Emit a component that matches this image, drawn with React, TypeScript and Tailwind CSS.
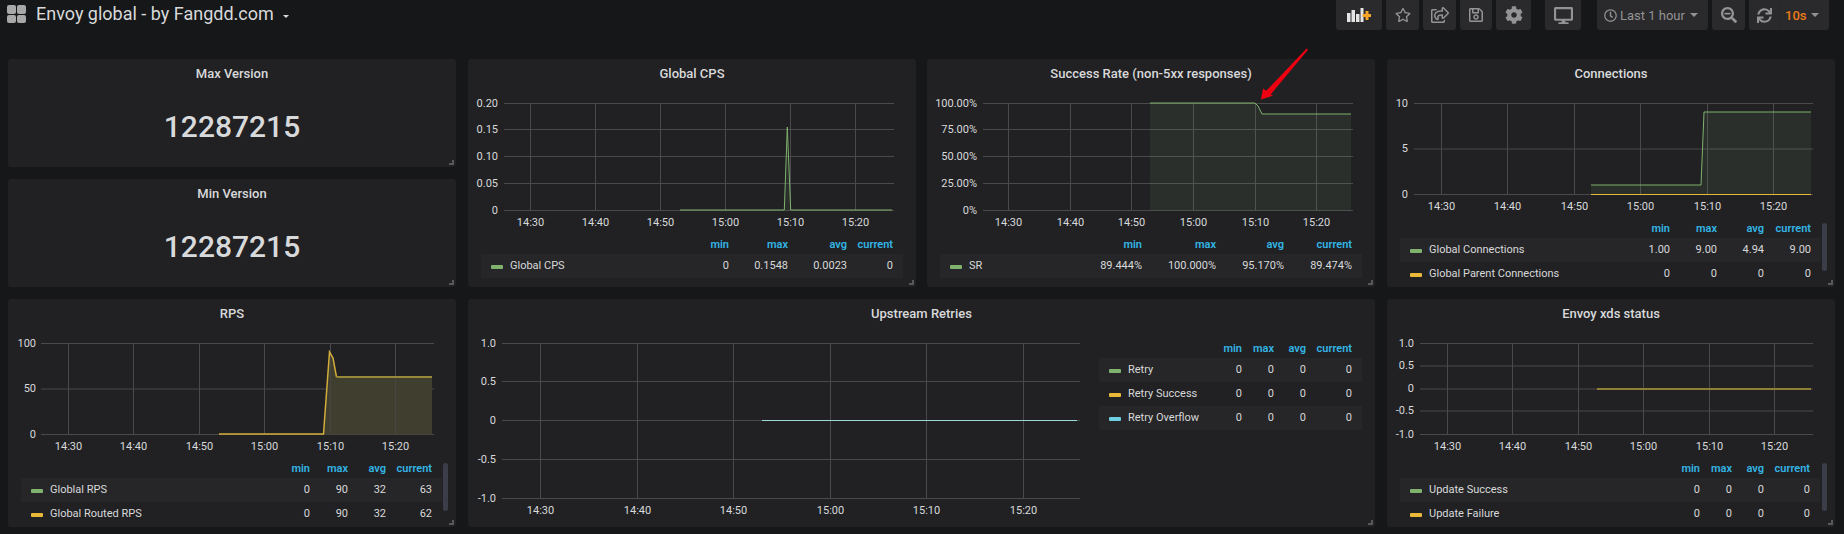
import type { ReactNode } from "react";
import { FaRegStar, FaRegShareSquare, FaRegSave, FaCog, FaDesktop, FaRegClock, FaSearchMinus, FaSync } from "react-icons/fa";

const GREEN = "#7eb26d";
const YELLOW = "#eab839";
const CYAN = "#6ed0e0";
const TIMES = ["14:30", "14:40", "14:50", "15:00", "15:10", "15:20"];

function Caret({ className }: { className?: string }) {
  return (
    <svg viewBox="0 0 8 4" className={className}>
      <polygon points="0,0 8,0 4,4" fill="currentColor" />
    </svg>
  );
}

function NavButton({ className, children }: { className: string; children: ReactNode }) {
  return (
    <div className={`flex h-[30px] items-center justify-center rounded-b-[3px] bg-[#2a2a2c] text-[#939395] ${className}`}>
      {children}
    </div>
  );
}

function Header() {
  return (
    <div className="flex h-[59px] items-start pr-[15px]">
      <div className="flex h-[28px] items-center pl-[7px]">
        <div className="grid h-[18px] w-[19px] grid-cols-2 gap-px">
          <span className="rounded-[2px] bg-[#a8a8a8]" />
          <span className="rounded-[2px] bg-[#a8a8a8]" />
          <span className="rounded-[2px] bg-[#a8a8a8]" />
          <span className="rounded-[2px] bg-[#a8a8a8]" />
        </div>
        <span className="ml-[10px] text-[18px] leading-none text-[#d8d9da]">Envoy global - by Fangdd.com</span>
        <Caret className="ml-[9px] mt-[5px] h-[3px] w-[6px] text-[#d8d9da]" />
      </div>
      <div className="ml-auto flex items-start">
        <NavButton className="w-[46px]">
          <svg width="24" height="14" viewBox="0 0 24 14">
            <rect x="0" y="5" width="3.5" height="9" fill="#e4e4e4" />
            <rect x="4.5" y="2" width="3.5" height="12" fill="#e4e4e4" />
            <rect x="9" y="6" width="3.5" height="8" fill="#e4e4e4" />
            <rect x="13.5" y="0" width="3" height="14" fill="#e4e4e4" />
            <path d="M18.5 3h3v3h3v3h-3v3h-3V9h-3V6h3z" fill="#f6a528" />
          </svg>
        </NavButton>
        <NavButton className="ml-[4px] w-[33px]"><FaRegStar size={16} /></NavButton>
        <NavButton className="ml-[4px] w-[33px]"><FaRegShareSquare size={18} /></NavButton>
        <NavButton className="ml-[4px] w-[32px]"><FaRegSave size={16} /></NavButton>
        <NavButton className="ml-[4px] w-[35px]"><FaCog size={18} /></NavButton>
        <NavButton className="ml-[14px] w-[36px]"><FaDesktop size={19} /></NavButton>
        <NavButton className="ml-[16px] w-[111px] justify-start pl-[7px]">
          <FaRegClock size={13} />
          <span className="ml-[3px] text-[13px] leading-none">Last 1 hour</span>
          <Caret className="ml-[5px] h-[4px] w-[8px]" />
        </NavButton>
        <NavButton className="ml-[4px] w-[33px]"><FaSearchMinus size={16} /></NavButton>
        <NavButton className="ml-[4px] w-[80px] justify-start">
          <div className="flex h-full w-[31px] items-center justify-center border-r border-[#262628]">
            <FaSync size={15} />
          </div>
          <span className="ml-[5px] text-[13px] font-medium leading-none text-[#eb7b18]">10s</span>
          <Caret className="ml-[5px] h-[4px] w-[8px]" />
        </NavButton>
      </div>
    </div>
  );
}

function Panel({ title, className, children }: { title: string; className: string; children: ReactNode }) {
  return (
    <div className={`relative overflow-hidden rounded-[3px] bg-[#212124] ${className}`}>
      <div className="h-[28px] pt-[5px] text-center text-[13px] font-medium leading-[20px] text-[#d8d9da]">{title}</div>
      {children}
      <span className="absolute bottom-[2px] right-[2px] h-[5px] w-[5px] border-b-2 border-r-2 border-[#58585a]" />
    </div>
  );
}

function Stat({ title, value }: { title: string; value: string }) {
  return (
    <Panel title={title} className="h-[108px]">
      <div className="mt-[22px] text-center text-[30px] font-medium leading-[36px] text-[#d8d9da]">{value}</div>
    </Panel>
  );
}

type ChartProps = {
  box: [number, number, number, number];
  grid: [number, string][];
  xl: number;
  xr: number;
  ticks: number[];
  labelY: number;
  axisX: number;
  children?: ReactNode;
};

// box is in page coordinates, so every shape below can use what was measured on the screenshot
function Chart({ box, grid, xl, xr, ticks, labelY, axisX, children }: ChartProps) {
  return (
    <svg width={box[2]} height={box[3]} viewBox={box.join(" ")} className="block shrink-0">
      {grid.map(([y]) => (
        <line key={y} x1={xl} x2={xr} y1={y} y2={y} stroke="#4a4a4c" strokeWidth="1" />
      ))}
      {ticks.map((x) => (
        <line key={x} x1={x} x2={x} y1={grid[0][0]} y2={grid[grid.length - 1][0]} stroke="#4a4a4c" strokeWidth="1" />
      ))}
      {children}
      {grid.map(([y, label]) => (
        <text key={label} x={axisX} y={y + 3} textAnchor="end" fontSize="11" fill="#d8d9da">{label}</text>
      ))}
      {ticks.map((x, i) => (
        <text key={x} x={x} y={labelY} textAnchor="middle" fontSize="11" fill="#d8d9da">{TIMES[i]}</text>
      ))}
    </svg>
  );
}

type Row = { name: string; color: string; values: string[] };

function Legend({ rows, cols, className }: { rows: Row[]; cols: string; className: string }) {
  return (
    <div className={`text-[11px] leading-none ${className}`}>
      <div className={`grid h-[20px] items-center pr-[10px] text-right font-semibold text-[#33b5e5] ${cols}`}>
        <span className="col-start-2">min</span>
        <span>max</span>
        <span>avg</span>
        <span>current</span>
      </div>
      {rows.map((row, i) => (
        <div key={row.name} className={`grid h-[24px] items-center pb-[2px] pr-[10px] text-right text-[#d8d9da] ${cols} ${i % 2 === 0 ? "bg-[#262628]" : ""}`}>
          <div className="flex items-center whitespace-nowrap pl-[10px]">
            <span className="mt-[4px] h-[4px] w-[12px] rounded-[1px]" style={{ backgroundColor: row.color }} />
            <span className="ml-[7px]">{row.name}</span>
          </div>
          {row.values.map((v, j) => (
            <span key={j}>{v}</span>
          ))}
        </div>
      ))}
    </div>
  );
}

function Scrollbar({ className }: { className: string }) {
  return <span className={`absolute w-[5px] rounded-[3px] bg-[#3b3d49] ${className}`} />;
}

export default function App() {
  return (
    <div className="relative h-[534px] w-[1844px] overflow-hidden bg-[#161719] font-['Roboto',sans-serif]">
      <Header />
      <div className="grid grid-cols-[460px_459px_460px_448px] gap-y-[12px] pl-[8px]">
        <div className="flex h-[228px] w-[448px] flex-col gap-[12px]">
          <Stat title="Max Version" value="12287215" />
          <Stat title="Min Version" value="12287215" />
        </div>

        <Panel title="Global CPS" className="h-[228px] w-[448px]">
          <Chart
            box={[468, 87, 448, 147]}
            grid={[[103.5, "0.20"], [129.5, "0.15"], [156.5, "0.10"], [183.5, "0.05"], [210.5, "0"]]}
            xl={504}
            xr={894}
            ticks={[530.5, 595.5, 660.5, 725.5, 790.5, 855.5]}
            labelY={226}
            axisX={498}
          >
            <polygon points="680,210.5 784.3,210.5 787.3,127 790.7,210.5 892,210.5" fill={GREEN} fillOpacity="0.1" />
            <polyline points="680,210 784.3,210 787.3,127 790.7,210 892,210" fill="none" stroke={GREEN} strokeWidth="1" />
          </Chart>
          <Legend
            className="mx-[13px] w-[422px]"
            cols="grid-cols-[1fr_59px_59px_59px_46px]"
            rows={[{ name: "Global CPS", color: GREEN, values: ["0", "0.1548", "0.0023", "0"] }]}
          />
        </Panel>

        <Panel title="Success Rate (non-5xx responses)" className="h-[228px] w-[448px]">
          <Chart
            box={[927, 87, 448, 147]}
            grid={[[103.5, "100.00%"], [129.5, "75.00%"], [156.5, "50.00%"], [183.5, "25.00%"], [210.5, "0%"]]}
            xl={983}
            xr={1353}
            ticks={[1008.5, 1070.5, 1131.5, 1193.5, 1255.5, 1316.5]}
            labelY={226}
            axisX={977}
          >
            <polygon points="1150,103 1255,103 1258,106 1262,114 1351,114 1351,210.5 1150,210.5" fill={GREEN} fillOpacity="0.1" />
            <polyline points="1150,103 1255,103 1258,106 1262,114 1351,114" fill="none" stroke={GREEN} strokeWidth="1" />
          </Chart>
          <Legend
            className="mx-[13px] w-[422px]"
            cols="grid-cols-[1fr_60px_74px_68px_68px]"
            rows={[{ name: "SR", color: GREEN, values: ["89.444%", "100.000%", "95.170%", "89.474%"] }]}
          />
        </Panel>

        <Panel title="Connections" className="h-[228px] w-[448px]">
          <Chart
            box={[1387, 87, 448, 131]}
            grid={[[103.5, "10"], [149, "5"], [194.5, "0"]]}
            xl={1414}
            xr={1813}
            ticks={[1441.5, 1507.5, 1574.5, 1640.5, 1707.5, 1773.5]}
            labelY={210}
            axisX={1408}
          >
            <polygon points="1591,185 1701,185 1704,112 1811,112 1811,194.5 1591,194.5" fill={GREEN} fillOpacity="0.1" />
            <polyline points="1591,185 1701,185 1704,112 1811,112" fill="none" stroke={GREEN} strokeWidth="1" />
            <line x1="1591" x2="1811" y1="194.5" y2="194.5" stroke={YELLOW} strokeWidth="1" />
          </Chart>
          <Legend
            className="ml-[13px] w-[421px]"
            cols="grid-cols-[1fr_40px_47px_47px_47px]"
            rows={[
              { name: "Global Connections", color: GREEN, values: ["1.00", "9.00", "4.94", "9.00"] },
              { name: "Global Parent Connections", color: YELLOW, values: ["0", "0", "0", "0"] },
            ]}
          />
          <Scrollbar className="right-[8px] top-[164px] h-[48px]" />
        </Panel>

        <Panel title="RPS" className="h-[228px] w-[448px]">
          <Chart
            box={[8, 327, 448, 131]}
            grid={[[343.5, "100"], [389, "50"], [434.5, "0"]]}
            xl={41}
            xr={434}
            ticks={[68.5, 133.5, 199.5, 264.5, 330.5, 395.5]}
            labelY={450}
            axisX={36}
          >
            <polygon points="323.5,434.5 329.5,352 333,358 336.5,377 432,377 432,434.5" fill="#403e2f" />
            <line x1="330.5" x2="330.5" y1="356" y2="434.5" stroke="#4a4a4c" strokeWidth="1" opacity="0.6" />
            <line x1="395.5" x2="395.5" y1="377" y2="434.5" stroke="#4a4a4c" strokeWidth="1" opacity="0.6" />
            <polyline points="219,434 323.5,434 329.5,352 333,358 336.5,377" fill="none" stroke="#d2ad3a" strokeWidth="1.5" />
            <line x1="336.5" x2="432" y1="377" y2="377" stroke="#96893a" strokeWidth="2" />
          </Chart>
          <Legend
            className="ml-[13px] w-[421px]"
            cols="grid-cols-[1fr_40px_38px_38px_46px]"
            rows={[
              { name: "Globlal RPS", color: GREEN, values: ["0", "90", "32", "63"] },
              { name: "Global Routed RPS", color: YELLOW, values: ["0", "90", "32", "62"] },
            ]}
          />
          <Scrollbar className="right-[8px] top-[164px] h-[48px]" />
        </Panel>

        <Panel title="Upstream Retries" className="col-span-2 h-[228px] w-[907px]">
          <div className="flex">
            <Chart
              box={[468, 327, 631, 200]}
              grid={[[343.5, "1.0"], [381.5, "0.5"], [420.5, "0"], [459.5, "-0.5"], [498.5, "-1.0"]]}
              xl={502}
              xr={1080}
              ticks={[540.5, 637.5, 733.5, 830.5, 926.5, 1023.5]}
              labelY={514}
              axisX={496}
            >
              <line x1="762" x2="1077" y1="420.5" y2="420.5" stroke="#9fd9e0" strokeWidth="1" />
            </Chart>
            <Legend
              className="mt-[11px] w-[263px]"
              cols="grid-cols-[1fr_32px_32px_32px_46px]"
              rows={[
                { name: "Retry", color: GREEN, values: ["0", "0", "0", "0"] },
                { name: "Retry Success", color: YELLOW, values: ["0", "0", "0", "0"] },
                { name: "Retry Overflow", color: CYAN, values: ["0", "0", "0", "0"] },
              ]}
            />
          </div>
        </Panel>

        <Panel title="Envoy xds status" className="h-[228px] w-[448px]">
          <Chart
            box={[1387, 327, 448, 131]}
            grid={[[343.5, "1.0"], [366, "0.5"], [389, "0"], [411, "-0.5"], [434.5, "-1.0"]]}
            xl={1420}
            xr={1813}
            ticks={[1447.5, 1512.5, 1578.5, 1643.5, 1709.5, 1774.5]}
            labelY={450}
            axisX={1414}
          >
            <line x1="1597" x2="1811" y1="389" y2="389" stroke="#8f7f35" strokeWidth="2" />
          </Chart>
          <Legend
            className="ml-[13px] w-[420px]"
            cols="grid-cols-[1fr_32px_32px_32px_46px]"
            rows={[
              { name: "Update Success", color: GREEN, values: ["0", "0", "0", "0"] },
              { name: "Update Failure", color: YELLOW, values: ["0", "0", "0", "0"] },
            ]}
          />
          <Scrollbar className="right-[8px] top-[164px] h-[48px]" />
        </Panel>
      </div>

      {/* annotation arrow drawn over the screenshot */}
      <svg className="absolute left-[1255px] top-[44px]" width="58" height="60" viewBox="1255 44 58 60">
        <polygon points="1261,99.5 1263,88.5 1266.3,90.8 1306.6,48.4 1308,49.8 1270.6,94.4 1273.2,95.6" fill="#ee0011" />
      </svg>
    </div>
  );
}
